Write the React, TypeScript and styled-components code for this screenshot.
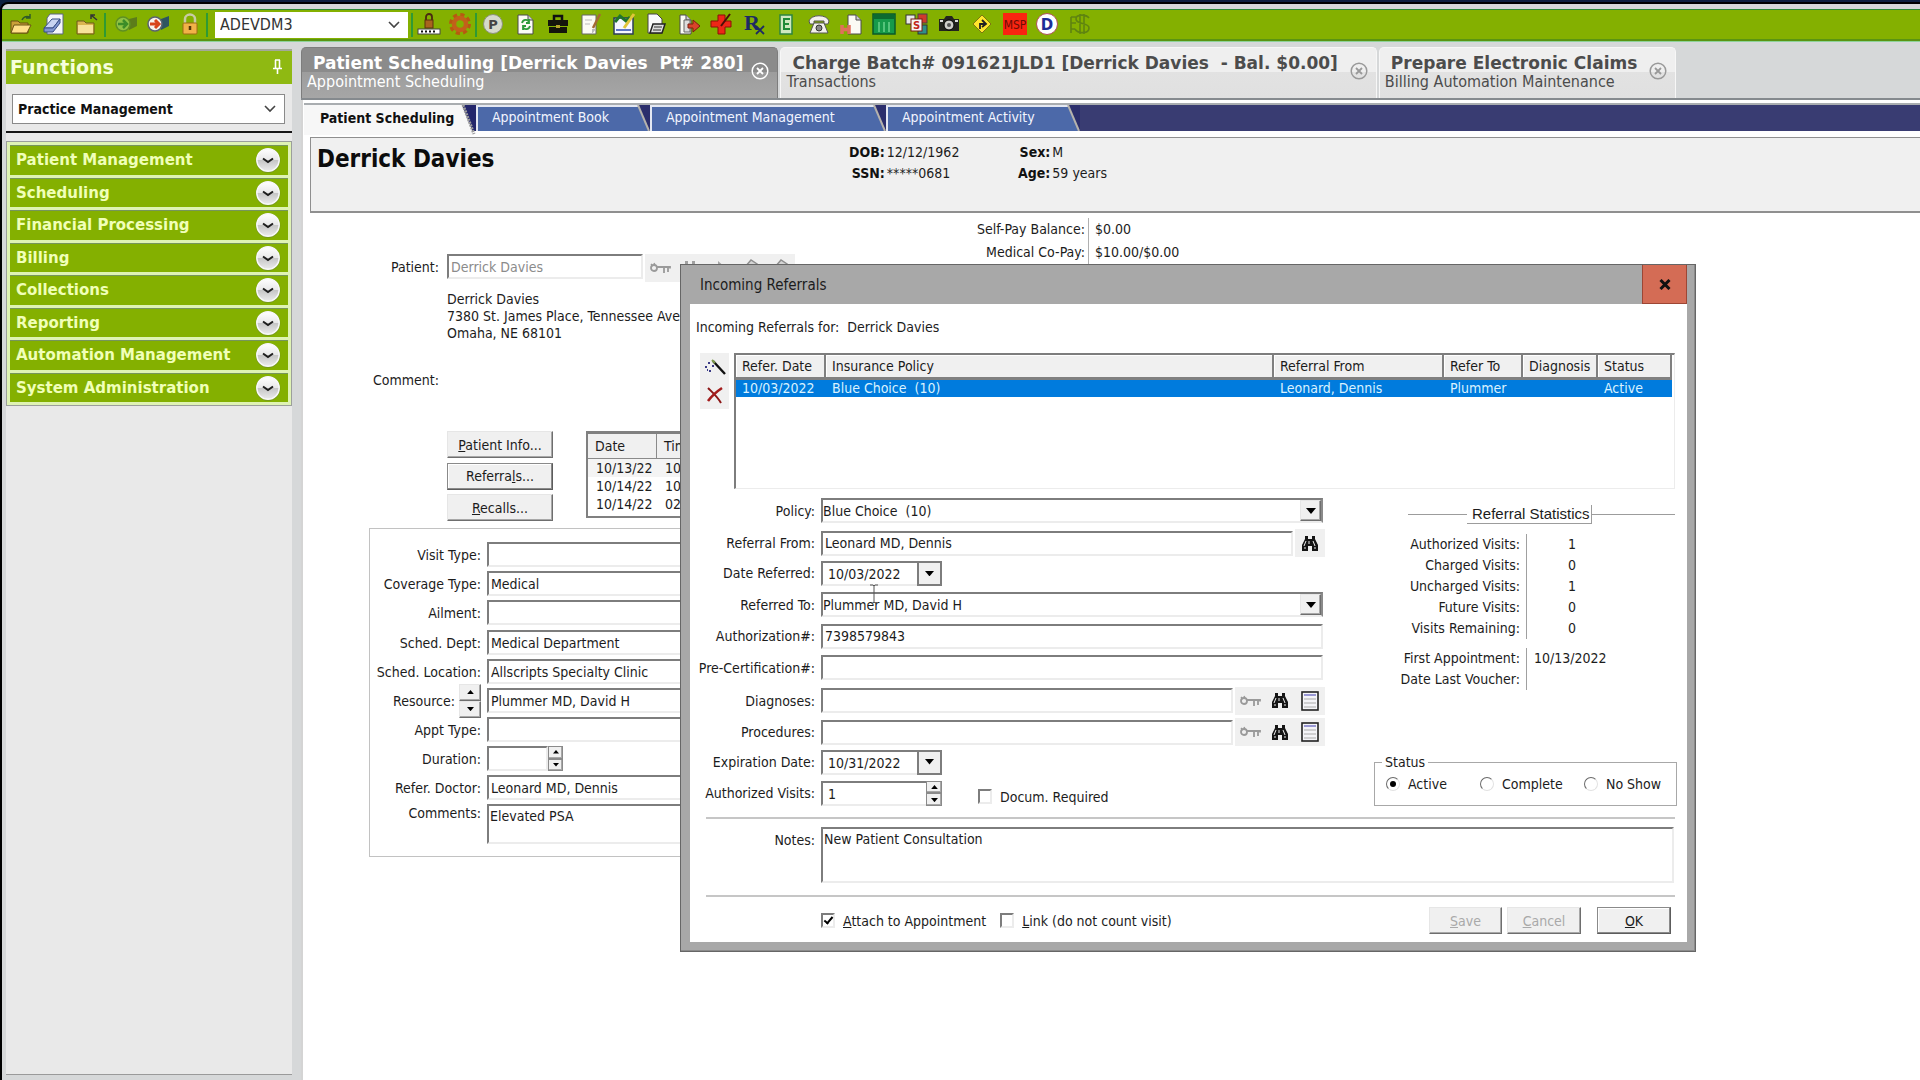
import React from "react";
import styled, { createGlobalStyle, css } from "styled-components";

const FONT = `"DejaVu Sans Condensed", "DejaVu Sans", sans-serif`;
const WIDE = `"DejaVu Sans", sans-serif`;

const Global = createGlobalStyle`
  *, *::before, *::after { box-sizing: border-box; }
  html, body { margin: 0; padding: 0; background: #0d2040; }
  body { font: 14px/18px ${FONT}; color: #1c1c1c; overflow: hidden; }
  button, input, select, textarea { font: inherit; color: inherit; margin: 0; border-radius: 0; }
  button { padding: 0; border: 0; background: none; }
  dl, dd, dt, p, h1, h2, fieldset { margin: 0; padding: 0; }
`;

const sunken = css`
  border: 2px solid;
  border-color: #7d7d7d #ececec #ececec #7d7d7d;
  background: #fff;
`;
const raised = css`
  border: 1px solid;
  border-color: #e6e6e6 #6e6e6e #6e6e6e #e6e6e6;
  box-shadow: inset -1px -1px 0 #a8a8a8;
  background: #f0f0f0;
`;

/* ---------- shell ---------- */
const Shell = styled.div`
  position: relative;
  min-height: 100vh;
  display: flex;
  flex-direction: column;
  padding-top: 2px;
`;
const Frame = styled.div`
  flex: 1;
  display: flex;
  flex-direction: column;
  background: #d6d8d9;
  border: solid #000;
  border-width: 2px 0 0 2px;
  border-top-left-radius: 8px;
  overflow: hidden;
`;
const Toolbar = styled.header`
  margin-top: 5px;
  height: 32px;
  display: flex;
  align-items: center;
  background: #84b000;
  border-top: 1px solid #2c8a38;
  border-bottom: 2px solid #5a9412;
  box-shadow: 0 1px 0 #8fd39a;
`;
const IconRun = styled.div<{ $width: number; $count: number; $start?: number }>`
  display: grid;
  grid-template-columns: repeat(${(p) => p.$count}, 1fr);
  width: ${(p) => p.$width}px;
  margin-left: ${(p) => p.$start ?? 0}px;
`;
const ToolButton = styled.button`
  display: grid;
  place-items: start center;
  height: 26px;
`;
const Divider = styled.span`
  width: 2px;
  height: 24px;
  background: #2f9a34;
`;
const SelectBox = styled.div<{ $kind: "toolbar" | "panel" }>`
  display: grid;
  grid-template-columns: 1fr 28px;
  align-items: center;
  background: #fff;
  > select {
    grid-area: 1 / 1 / 2 / 3;
    appearance: none;
    border: 0;
    background: none;
    padding: 0 5px;
    height: 100%;
    outline: 0;
  }
  > svg { grid-area: 1 / 2; justify-self: center; pointer-events: none; }
  ${(p) =>
    p.$kind === "toolbar"
      ? css`width: 193px; height: 26px; margin: 0 3px 0 7px; font-size: 16px; color: #333;`
      : css`height: 30px; margin: 10px 7px 7px 6px; border: 1px solid #8a8a8a; font-weight: 700; color: #111;`}
`;

const Workspace = styled.div`
  flex: 1;
  display: grid;
  grid-template-columns: 290px 1fr;
`;

/* ---------- functions panel ---------- */
const Panel = styled.aside`
  margin: 8px 0 5px 4px;
  background: #e9e9e9;
  border-bottom: 1px solid #9a9a9a;
`;
const PanelTitle = styled.h2`
  height: 35px;
  display: flex;
  align-items: center;
  justify-content: space-between;
  padding: 0 9px 2px 4px;
  background: #8fb912;
  border-top: 2px solid #a3a89a;
  font: 700 19px/24px ${WIDE};
  color: #f6ffdc;
`;
const Rule = styled.div`
  height: 2px;
  background: #161616;
`;
const Menu = styled.nav`
  margin-top: 8px;
  height: 265px;
  display: grid;
  grid-auto-rows: 1fr;
  gap: 3px;
  padding: 3px;
  border: 1px solid #9b9f9b;
  background: #dff3b4;
`;
const MenuItem = styled.button`
  display: flex;
  align-items: center;
  justify-content: space-between;
  padding: 0 7px 0 6px;
  background: #84b000;
  border-top: 1px solid #76955c;
  font: 700 15px/20px ${WIDE};
  color: #f0ffb8;
`;

/* ---------- document tabs ---------- */
const Content = styled.main`
  margin-left: 9px;
  padding-top: 6px;
  display: flex;
  flex-direction: column;
  min-width: 0;
`;
const DocTabs = styled.div`
  display: flex;
  gap: 2px;
  height: 51px;
`;
const DocTab = styled.div<{ $active?: boolean }>`
  display: flex;
  align-items: center;
  gap: ${(p) => (p.$active ? 8 : 12)}px;
  padding: 0 8px 0 5px;
  border: solid ${(p) => (p.$active ? "#7d7d7d" : "#f7f7f7")};
  border-width: 1px 1px 0;
  border-radius: 5px 5px 0 0;
  background: ${(p) =>
    p.$active
      ? "linear-gradient(#8b8b8b 48%, #9d9d9d 48%, #a6a6a6)"
      : "linear-gradient(#efefef 48%, #e2e2e2 48%, #e0e0e0)"};
  color: ${(p) => (p.$active ? "#fff" : "#4c4c4c")};
`;
const DocText = styled.div`
  display: flex;
  flex-direction: column;
  padding-bottom: 3px;
  white-space: pre;
  font-size: 16px;
  line-height: 18px;
  > strong { padding-left: 6px; font: 700 17px/20px ${WIDE}; }
`;
const PageFrame = styled.div`
  flex: 1;
  display: flex;
  flex-direction: column;
  border-top: 2px solid #858a8e;
  background: #fff;
  padding-left: 3px;
  box-shadow: inset 2px 0 0 #d4d4d4;
`;
const SubTabs = styled.div`
  display: grid;
  grid-template-columns: 172px 174px 236px 194px 1fr;
  height: 26px;
  margin-top: 5px;
  background: #393c72;
  box-shadow: 0 -2px 0 #a9adb0;
`;
const SubTab = styled.button<{ $active?: boolean }>`
  display: flex;
  min-width: 0;
  height: ${(p) => (p.$active ? 30 : 26)}px;
  font-weight: ${(p) => (p.$active ? 700 : 400)};
  color: ${(p) => (p.$active ? "#111" : "#f2f5ff")};
  > span {
    flex: 1;
    align-self: stretch;
    display: flex;
    align-items: center;
    padding-left: 14px;
    padding-bottom: ${(p) => (p.$active ? 6 : 4)}px;
    background: ${(p) => (p.$active ? "#f7f7f7" : "#4c69a9")};
    border: solid ${(p) => (p.$active ? "#f7f7f7" : "#e4e8f2")};
    border-width: 2px 0 0 2px;
    white-space: nowrap;
  }
`;
const PatientHeader = styled.section`
  margin: 6px 0 0 6px;
  height: 76px;
  padding: 4px 0 0 6px;
  display: grid;
  grid-template-columns: 532px 169px 1fr;
  align-items: start;
  border: 1px solid #8f8f8f;
  border-bottom-width: 2px;
  border-right: 0;
  background: #f0f0f0;
  > h1 { padding-top: 1px; font: 700 24px/32px ${FONT}; color: #0c0c0c; }
`;
const Facts = styled.dl`
  display: grid;
  grid-template-columns: max-content max-content;
  column-gap: 2px;
  line-height: 21px;
  > dt { font-weight: 700; text-align: right; color: #111; }
`;

/* ---------- page body ---------- */
const Body = styled.div`
  display: grid;
  grid-template-columns: 606px 1fr;
  padding-left: 65px;
`;
const PatientColumn = styled.div`
  display: flex;
  flex-direction: column;
  padding-top: 41px;
`;
const PatientGrid = styled.div`
  display: grid;
  grid-template-columns: 70px 1fr;
  column-gap: 8px;
`;
const RightLabel = styled.label`
  text-align: right;
  white-space: nowrap;
  align-self: center;
`;
const PatientField = styled.div`
  display: flex;
  gap: 2px;
  height: 26px;
`;
const Field = styled.input<{ $w?: string; $muted?: boolean }>`
  ${sunken}
  width: ${(p) => p.$w ?? "100%"};
  min-width: 0;
  height: 25px;
  padding: 0 2px;
  outline: 0;
  ${(p) => p.$muted && "color: #8b8b8b;"}
`;
const Strip = styled.div<{ $vertical?: boolean }>`
  display: grid;
  grid-auto-flow: ${(p) => (p.$vertical ? "row" : "column")};
  ${(p) => (p.$vertical ? "grid-auto-rows: 28px; width: 29px;" : "grid-auto-columns: 30px; height: 28px;")}
  background: #f0f0f0;
  color: #9a9a9a;
  > button { display: grid; place-items: center; }
`;
const Address = styled.address`
  grid-column: 2;
  margin-top: 11px;
  font-style: normal;
  line-height: 17px;
`;
const CommentRow = styled.div`
  grid-column: 1 / 3;
  display: grid;
  grid-template-columns: 70px 1fr;
  margin-top: 29px;
  text-align: right;
`;
const Actions = styled.div`
  grid-column: 2;
  margin-top: 42px;
  height: 90px;
  display: flex;
  align-items: flex-start;
  gap: 33px;
`;
const ActionStack = styled.div`
  width: 106px;
  height: 90px;
  display: flex;
  flex-direction: column;
  justify-content: space-between;
`;
const Push = styled.button<{ $default?: boolean }>`
  ${raised}
  height: 27px;
  white-space: nowrap;
  ${(p) => p.$default && "border-color: #8a8a8a #5c5c5c #5c5c5c #8a8a8a; box-shadow: inset -1px -1px 0 #8a8a8a, inset 1px 1px 0 #fff;"}
  &:disabled { color: #a9a9a9; }
`;
const VisitTable = styled.table`
  width: 220px;
  border: 2px solid #808080;
  border-top-width: 3px;
  border-spacing: 0;
  table-layout: fixed;
  background: #fff;
  th, td { padding: 0 8px; text-align: left; font-weight: 400; white-space: nowrap; }
  th { height: 25px; background: #f0f0f0; border: solid #8a8a8a; border-width: 0 1px 1px 0; padding-left: 7px; }
  td { height: 18px; }
  tbody tr:first-child td { background: #f4f4f4; }
  tbody tr:last-child td { padding-bottom: 3px; }
  col:first-child { width: 69px; }
`;
const Booking = styled.section`
  margin-top: 7px;
  width: 560px;
  padding: 13px 0 12px;
  border: 1px solid #c2c2c2;
  display: flex;
  flex-direction: column;
  gap: 5px;
`;
const BookingGroup = styled.div`
  display: grid;
  grid-template-columns: 111px 1fr;
  gap: 4px 6px;
`;
const ResourceLabel = styled.div`
  display: flex;
  justify-content: flex-end;
  align-items: center;
  gap: 4px;
  height: 25px;
`;
const Spin = styled.div<{ $w: number; $h: number }>`
  display: grid;
  grid-template-rows: 1fr 1fr;
  flex: none;
  width: ${(p) => p.$w}px;
  height: ${(p) => p.$h}px;
  > button { ${raised} display: grid; place-items: center; min-height: 0; }
`;
const InlineSpin = styled.div<{ $w: number }>`
  display: flex;
  width: ${(p) => p.$w}px;
  height: 25px;
  > input { flex: 1; }
  > div > button { border-color: #8a8a8a; }
`;
const Area = styled.textarea<{ $h: number }>`
  ${sunken}
  display: block;
  width: 100%;
  height: ${(p) => p.$h}px;
  padding: 2px 1px 0;
  line-height: 17px;
  resize: none;
  outline: 0;
`;
const TopLabel = styled.label`
  text-align: right;
`;
const Balances = styled.dl`
  display: grid;
  grid-template-columns: 114px 1fr;
  align-content: start;
  line-height: 23px;
  margin-top: 5px;
  > dt { text-align: right; padding-right: 3px; border-right: 1px solid #b0b0b0; white-space: nowrap; }
  > dd { padding-left: 6px; }
`;

/* ---------- dialog ---------- */
const Dialog = styled.section`
  position: absolute;
  left: 680px;
  top: 264px;
  width: 1016px;
  border: 1px solid #666;
  background: #a8a8a8;
  padding: 0 8px 9px 9px;
  box-shadow: inset -1px -1px 0 #8b8b8b;
`;
const DialogBar = styled.header`
  height: 39px;
  display: flex;
  align-items: center;
  justify-content: space-between;
  padding-left: 10px;
  font-size: 15px;
`;
const Close = styled.button`
  width: 45px;
  height: 39px;
  display: grid;
  place-items: center;
  background: #d46c55;
  border: solid #9d4634;
  border-width: 0 1px 1px;
`;
const DialogBody = styled.form`
  display: flex;
  flex-direction: column;
  background: #fff;
  padding: 14px 10px 8px 0;
`;
const Caption = styled.p`
  display: flex;
  gap: 8px;
  padding-left: 6px;
`;
const ListRow = styled.div`
  margin-top: 17px;
  padding: 0 2px 0 10px;
  display: flex;
  align-items: flex-start;
  gap: 5px;
`;
const ListBox = styled.div`
  flex: 1;
  height: 136px;
  border: solid;
  border-color: #7d7d7d #ececec #ececec #7d7d7d;
  border-width: 2px 1px 1px 2px;
  padding-right: 2px;
`;
const ReferralTable = styled.table`
  width: 100%;
  border-spacing: 0;
  table-layout: fixed;
  th, td { padding: 0 0 0 6px; text-align: left; font-weight: 400; white-space: nowrap; overflow: hidden; }
  th {
    height: 25px;
    background: #f0f0f0;
    border: solid #808080;
    border-width: 0 2px 3px 0;
    box-shadow: inset 1px 1px 0 #fff;
  }
  td { height: 17px; line-height: 17px; background: #007bdd; color: #d9f2ff; }
`;
const FormRow = styled.div`
  margin-top: 9px;
  display: grid;
  grid-template-columns: 635px 1fr;
  column-gap: 49px;
`;
const Fields = styled.div`
  height: 308px;
  display: flex;
  flex-direction: column;
  justify-content: space-between;
`;
const FieldRow = styled.div`
  display: grid;
  grid-template-columns: 125px 1fr;
  column-gap: 6px;
  align-items: center;
  height: 25px;
`;
const FieldLine = styled.div`
  display: flex;
  align-items: center;
  gap: 2px;
  > input { flex: 1; }
`;
const Drop = styled.div`
  ${sunken}
  border-right-color: #8a8a8a;
  margin-right: 2px;
  height: 25px;
  display: grid;
  grid-template-columns: 1fr 21px;
  > select {
    grid-area: 1 / 1 / 2 / 3;
    appearance: none;
    border: 0;
    background: none;
    padding: 0;
    outline: 0;
    white-space: pre;
  }
  > span { grid-area: 1 / 2; ${raised} display: grid; place-items: center; pointer-events: none; }
`;
const DateBox = styled.div`
  display: flex;
  width: 121px;
  height: 25px;
  > input { flex: 1; border-right: 0; padding: 2px 0 0 5px; }
  > button { width: 25px; border: 2px solid #7d7d7d; background: #f0f0f0; display: grid; place-items: center; }
  > div > button { border-color: #8a8a8a; }
`;
const VisitsLine = styled.div`
  display: flex;
  align-items: flex-end;
  gap: 36px;
`;
const Check = styled.label`
  display: flex;
  align-items: center;
  gap: 8px;
  white-space: nowrap;
  > input {
    appearance: none;
    ${sunken}
    width: 14px;
    height: 15px;
    display: grid;
    place-items: center;
    &:checked::after {
      content: "";
      width: 5px;
      height: 9px;
      margin-top: -3px;
      border: solid #000;
      border-width: 0 2px 2px 0;
      transform: rotate(40deg);
    }
  }
`;
const Side = styled.div`
  display: flex;
  flex-direction: column;
  padding-top: 7px;
`;
const StatHeading = styled.div`
  display: grid;
  grid-template-columns: 59px max-content 1fr;
  align-items: center;
  margin: 0 2px 0 34px;
  font: 15px/18px "Liberation Sans", Arial, sans-serif;
  &::before, &::after { content: ""; height: 1px; background: #9c9c9c; }
  > span { padding: 0 1px 0 5px; border: solid #9c9c9c; border-width: 0 1px 1px 0; }
`;
const Stats = styled.dl<{ $gap: number; $numeric?: boolean }>`
  margin-top: ${(p) => p.$gap}px;
  display: grid;
  grid-template-columns: 153px 49px 1fr;
  line-height: 21px;
  > dt { text-align: right; padding-right: 6px; border-right: 1px solid #a0a0a0; white-space: nowrap; }
  > dd { ${(p) => (p.$numeric ? "text-align: right;" : "padding-left: 7px; grid-column: 2 / 4;")} }
  > dt { grid-column: 1; }
`;
const StatusBox = styled.fieldset`
  margin-top: auto;
  height: 53px;
  min-width: 0;
  border: 1px solid #a8a8a8;
  padding: 4px 0 0 11px;
  > legend { margin-left: -4px; padding: 0 3px; }
`;
const StatusRow = styled.div`
  display: grid;
  grid-template-columns: 94px 104px 1fr;
`;
const Radio = styled.label`
  display: flex;
  align-items: center;
  gap: 8px;
  white-space: nowrap;
  > input {
    appearance: none;
    width: 14px;
    height: 14px;
    border: 1px solid;
    border-color: #6a6a6a #e2e2e2 #e2e2e2 #6a6a6a;
    border-radius: 50%;
    display: grid;
    place-items: center;
    &:checked::after { content: ""; width: 6px; height: 6px; border-radius: 50%; background: #000; }
  }
`;
const Separator = styled.hr<{ $top: number }>`
  width: calc(100% - 18px);
  margin: ${(p) => p.$top}px 0 0 16px;
  height: 2px;
  border: 0;
  background: #c6c6c6;
`;
const NotesRow = styled.div`
  display: grid;
  grid-template-columns: 125px 1fr;
  column-gap: 6px;
  margin: 8px 3px 0 0;
  > label { padding-top: 4px; }
`;
const Footer = styled.footer`
  margin: 10px 6px 0 131px;
  display: flex;
  align-items: center;
`;
const FooterChecks = styled.div`
  flex: 1;
  display: flex;
  gap: 14px;
`;
const FooterButtons = styled.div`
  display: grid;
  grid-template-columns: 73px 74px 74px;
  column-gap: 5px;
  > :last-child { margin-left: 11px; margin-right: -11px; }
  padding-right: 11px;
`;
const Pointer = styled.svg`
  position: absolute;
  left: 869px;
  top: 584px;
`;

/* ---------- drawings ---------- */
const Chevron = () => (
  <svg width="12" height="8" viewBox="0 0 12 8"><path d="M1 1l5 5 5-5" fill="none" stroke="#444" strokeWidth="1.6" /></svg>
);
const Tri = ({ up, s = 8 }: { up?: boolean; s?: number }) => (
  <svg width={s} height={s * 0.6} viewBox="0 0 10 6"><path d={up ? "M0 6L5 0l5 6z" : "M0 0h10L5 6z"} fill="#000" /></svg>
);
const Pin = () => (
  <svg width="11" height="16" viewBox="0 0 11 16"><path d="M3 1h5M3.500 1v8M7.500 1v8M1 9.500h9M5.500 9v6" fill="none" stroke="#fff" strokeWidth="1.600" /></svg>
);
const RoundChevron = () => (
  <svg width="26" height="26" viewBox="0 0 26 26">
    <defs>
      <linearGradient id="knob" x1="0" y1="0" x2="0" y2="1">
        <stop offset="0" stopColor="#fff" /><stop offset=".5" stopColor="#e8e8e8" /><stop offset=".52" stopColor="#c6c6c6" /><stop offset="1" stopColor="#ececec" />
      </linearGradient>
    </defs>
    <circle cx="13" cy="13.500" r="12.300" fill="#6d8a2c" opacity=".7" />
    <circle cx="13" cy="13" r="11.200" fill="url(#knob)" stroke="#f8f8f8" strokeWidth="1.500" />
    <path d="M8 11.500l5 3.500 5-3.500" fill="none" stroke="#1e1e1e" strokeWidth="2" />
  </svg>
);
const TabClose = ({ light }: { light?: boolean }) => (
  <svg width="18" height="18" viewBox="0 0 18 18">
    <circle cx="9" cy="9" r="7.800" fill="none" stroke={light ? "#fff" : "#999"} strokeWidth="1.500" />
    <path d="M6 6l6 6M12 6l-6 6" stroke={light ? "#fff" : "#999"} strokeWidth="1.800" />
  </svg>
);
const Slant = ({ active }: { active?: boolean }) => (
  <svg width="16" height={active ? 30 : 26} viewBox={active ? "0 0 16 30" : "0 0 16 26"}>
    {active ? (
      <><path d="M4 0h12v26H13z" fill="#23266b" /><path d="M0 0h2l12 30H0z" fill="#f7f7f7" /><path d="M3 0l11 29" stroke="#9c9c9c" strokeWidth="3" strokeDasharray="2 1" /></>
    ) : (
      <><path d="M4 0h12v26z" fill="#2b2e6c" /><path d="M0 0h4l11 26H0z" fill="#4c69a9" /><path d="M0 1h4" stroke="#e4e8f2" strokeWidth="2" /><path d="M4 0l11 26" stroke="#b5b2ac" strokeWidth="2" /></>
    )}
  </svg>
);
const Key = () => (
  <svg width="22" height="12" viewBox="0 0 22 12">
    <path d="M2 2l2 2M5 1l1 2" stroke="#9a9a9a" strokeWidth="1.500" />
    <circle cx="5" cy="6" r="3" fill="none" stroke="#9a9a9a" strokeWidth="1.800" />
    <path d="M8 5h13v1.500M15 5v6M19 5v5" fill="none" stroke="#9a9a9a" strokeWidth="1.800" />
  </svg>
);
const Binoculars = ({ gray }: { gray?: boolean }) => (
  <svg width="18" height="17" viewBox="0 0 18 17" fill={gray ? "#a0a0a0" : "#151515"}>
    <path d="M4 1h3v3h4V1h3v3l3 6v6h-6v-5H7v5H1v-6l3-6z" />
    <path d="M5 6l-2 5M8 6v3M12 6l2 5M3 13h2M13 13h2" stroke="#eee" strokeWidth="1" />
  </svg>
);
const Arrow = () => (
  <svg width="16" height="17" viewBox="0 0 16 17"><path d="M6 1l8 7-8 7v-4H1V5h5z" fill="#a6a6a6" /></svg>
);
const Stamp = () => (
  <svg width="18" height="19" viewBox="0 0 18 19"><path d="M4 8l6-7 6 4-3 5v7H3v-8z" fill="#d4d4d4" stroke="#8f8f8f" strokeWidth="1.500" /><path d="M6 8l5 3M6 13h5" stroke="#8f8f8f" /></svg>
);
const Sheet = () => (
  <svg width="18" height="20" viewBox="0 0 18 20">
    <rect x="1" y="1" width="16" height="18" fill="#f4f4f8" stroke="#222" strokeWidth="1.600" />
    <path d="M3 4h12" stroke="#7a78c8" strokeWidth="1.500" /><path d="M3 8h12M3 12h12M3 16h12" stroke="#aaa" />
  </svg>
);
const Wand = () => (
  <svg width="22" height="18" viewBox="0 0 22 18">
    <path d="M9 3l12 13" stroke="#111" strokeWidth="2.400" /><path d="M8 2l3 3" stroke="#7e9a4a" strokeWidth="2" />
    <path d="M4 5h2M8 8h2M1 9h2M5 13h2M3 12h1" stroke="#3a3a86" strokeWidth="2" />
  </svg>
);
const RedX = () => (
  <svg width="18" height="18" viewBox="0 0 18 18"><path d="M2 2c4 4 9 8 13 15" fill="none" stroke="#8c1616" strokeWidth="2" /><path d="M16 2C10 6 5 11 2 15" fill="none" stroke="#a41c1c" strokeWidth="2.600" /></svg>
);
const G = ({ children }: { children: React.ReactNode }) => (
  <svg width="24" height="24" viewBox="0 0 24 24">{children}</svg>
);
const Page = ({ x = 4, w = 15 }: { x?: number; w?: number }) => (
  <><path d={`M${x} 3h${w - 5}l5 5v14h-${w}z`} fill="#fbfbf4" stroke="#4a4a4a" /><path d={`M${x + w - 5} 3v5h5`} fill="#cfcfcf" stroke="#4a4a4a" /></>
);

const fileIcons: [string, React.ReactNode][] = [
  ["Open", <G><path d="M2 9h7l2 2h8v10H2z" fill="#caa03a" stroke="#6a5312" /><path d="M5 13h17l-4 8H2z" fill="#ffe08a" stroke="#6a5312" /><path d="M13 8c2-4 5-4 8-3M21 2v4h-4" fill="none" stroke="#2f5a2a" strokeWidth="1.500" /></G>],
  ["Erase", <G><path d="M8 2h13v20H5V6z" fill="#f3f4fa" stroke="#5b6680" /><path d="M2 16l8-9h8l-7 9z" fill="#c9d4f2" stroke="#374d86" /><path d="M2 16v4h9l7-9V7l-7 9z" fill="#8095cf" stroke="#374d86" /></G>],
  ["Close", <G><path d="M2 9h7l2 2h8v11H2z" fill="#d9b550" stroke="#6f5a1c" /><path d="M3 13h15v8H3z" fill="#f7e29a" /><path d="M22 8l-6-5m0 4V3h4" fill="none" stroke="#333" strokeWidth="1.500" /></G>],
];
const navIcons: [string, React.ReactNode][] = [
  ["Forward", <G><path d="M15 7l8-2v9l-8 4z" fill="#5c7d1a" /><circle cx="9" cy="12" r="7" fill="#8fc244" stroke="#5f8f22" strokeWidth="1.500" /><path d="M4 12h8M9 8l4 4-4 4" fill="none" stroke="#3c8c28" strokeWidth="2.500" /></G>],
  ["Record", <G><path d="M15 7l8-3v10l-8 4z" fill="#2d5560" /><circle cx="9" cy="12" r="7" fill="#f6f3ee" stroke="#5b6370" strokeWidth="1.500" /><path d="M4 12h8M9 8l4 4-4 4" fill="none" stroke="#d8431a" strokeWidth="3" /></G>],
  ["Lock", <G><path d="M7 12V7a5 4.500 0 0 1 10 0v5" fill="none" stroke="#c8cba4" strokeWidth="2.500" /><rect x="5" y="11" width="14" height="11" rx="1" fill="#f1b248" stroke="#9b6b13" /><path d="M12 14v4" stroke="#553808" strokeWidth="2.500" /></G>],
];
const adminIcons: [string, React.ReactNode][] = [
  ["Password", <G><path d="M9 13V5a3 3 0 0 1 6 0v8" fill="none" stroke="#4a2a10" strokeWidth="1.800" /><rect x="8" y="8" width="8" height="8" fill="#a8641e" stroke="#5a310c" /><rect x="1" y="17" width="22" height="5" fill="#fff" stroke="#444" /><path d="M4 19.500h16" stroke="#111" strokeWidth="2" strokeDasharray="2 2" /></G>],
  ["Settings", <G><circle cx="12" cy="12" r="9" fill="none" stroke="#b65a10" strokeWidth="4" strokeDasharray="4 3.070" /><circle cx="12" cy="12" r="6" fill="none" stroke="#c2601a" strokeWidth="4.500" /></G>],
];
const moduleIcons: [string, React.ReactNode][] = [
  ["Patient", <G><circle cx="12" cy="12" r="9.500" fill="#d6d9cb" stroke="#8b907c" /><text x="12" y="17" textAnchor="middle" fontFamily="DejaVu Sans" fontWeight="700" fontSize="13" fill="#444">P</text></G>],
  ["Refresh", <G><Page /><path d="M8 11c1-4 6-4 7-1M16 14c-1 4-6 4-7 1M15 7v4h-3M9 18v-4h3" fill="none" stroke="#2c9a3a" strokeWidth="1.800" /></G>],
  ["Case", <G><path d="M8 8V4h8v4" fill="none" stroke="#111" strokeWidth="2.500" /><path d="M2 8h20v6H2zM3 15h18v6H3z" fill="#14140c" /><path d="M10 13h4v3h-4z" fill="#b5a22c" /></G>],
  ["Note", <G><path d="M3 3h14v19H3z" fill="#fbfbf4" stroke="#666" /><path d="M17 17h-4v5z" fill="#bbb" /><path d="M21 2l-7 14" stroke="#a56b34" strokeWidth="2.500" /><path d="M6 8h7M6 12h5" stroke="#bbb" /></G>],
  ["Chart", <G><rect x="2" y="6" width="19" height="16" fill="#f6f7ff" stroke="#2b3c58" strokeWidth="1.500" /><path d="M3 10l5-6 6 5 4-4" fill="none" stroke="#20752c" strokeWidth="3" /><path d="M22 2L12 16" stroke="#e1c53a" strokeWidth="3" /><path d="M4 18h15" stroke="#5e74c4" strokeWidth="2" /></G>],
  ["Fax", <G><path d="M4 2h9l5 5v14H4z" fill="#fafafa" stroke="#444" /><path d="M9 12h12l-3 9H6z" fill="#ddd" stroke="#222" strokeWidth="1.500" /><path d="M10 15h8M9 18h8" stroke="#333" /></G>],
  ["Export", <G><Page x={3} w={11} /><path d="M7 8h6v12H7z" fill="#ddd" stroke="#666" /><path d="M11 12h5V8l7 6-7 6v-4h-5z" fill="#d8442a" stroke="#7c1d10" /></G>],
  ["Medical", <G><path d="M9 3h7v6h6v6h-6v7H9v-7H2V9h7z" fill="#ee2617" stroke="#8b1008" /><path d="M21 2l-9 12" stroke="#4a1008" strokeWidth="2" /></G>],
  ["Prescriptions", <G><text x="10" y="18" textAnchor="middle" fontFamily="Liberation Serif" fontWeight="700" fontSize="22" fill="#1d2a63">R</text><path d="M14 14l8 8M22 14l-8 8" stroke="#1d2a63" strokeWidth="1.800" /></G>],
  ["Encounter", <G><rect x="6" y="3" width="12" height="19" fill="#cfe8c0" stroke="#2c8440" strokeWidth="1.500" /><path d="M9 7h7M9 12h6M9 17h7M10 7v10" stroke="#1f8a38" strokeWidth="2" /></G>],
  ["Phone", <G><path d="M2 9c2-7 18-7 20 0l-1 3h-4V9H7v3H3z" fill="#f3f1ec" stroke="#555" /><path d="M7 11h10l4 10H3z" fill="#f3f1ec" stroke="#555" /><circle cx="12" cy="16" r="3" fill="#888" stroke="#333" /></G>],
  ["Records", <G><Page x={8} w={13} /><path d="M2 13v9M9 13v9M2 17.500h7" stroke="#e0705c" strokeWidth="3.500" /></G>],
  ["Table", <G><rect x="1" y="2" width="22" height="20" fill="#179a4a" stroke="#0b5a28" strokeWidth="1.500" /><path d="M2 5h20" stroke="#0c6b30" strokeWidth="4" /><path d="M7 10v10M12 10v10M17 10v10" stroke="#7fdf9c" strokeWidth="1.200" /></G>],
  ["Statements", <G><rect x="1" y="3" width="9" height="9" fill="#e9e9e9" stroke="#333" /><rect x="13" y="2" width="9" height="9" fill="#cf3a2c" stroke="#444" /><rect x="13" y="13" width="9" height="9" fill="#2f8f8a" stroke="#333" /><rect x="6" y="7" width="11" height="12" fill="#f5f5f5" stroke="#7a1a14" /><text x="11.500" y="17" textAnchor="middle" fontFamily="DejaVu Sans" fontWeight="700" fontSize="10" fill="#c2261b">S</text></G>],
  ["Camera", <G><path d="M2 7h5l2-3h6l2 3h5v12H2z" fill="#23241f" /><circle cx="12" cy="13" r="5" fill="#cfcfca" stroke="#000" /><circle cx="12" cy="13" r="2" fill="#555" /><path d="M3 9h3M18 9h3" stroke="#ddd" strokeWidth="2" /></G>],
  ["Directions", <G><path d="M12 3l9 9-9 9-9-9z" fill="#ffe62c" stroke="#7e7612" /><path d="M10 17v-5h5M12 8l4 4-4 3" fill="none" stroke="#222" strokeWidth="1.800" /></G>],
  ["MSP", <G><rect x="0" y="1" width="24" height="22" fill="#fa2410" /><text x="12" y="17" textAnchor="middle" fontFamily="DejaVu Sans Condensed" fontSize="12" fill="#6b0d05">MSP</text></G>],
  ["Documents", <G><circle cx="12" cy="12" r="10.500" fill="#fff" stroke="#b0505a" /><text x="12" y="17.500" textAnchor="middle" fontFamily="DejaVu Sans" fontWeight="700" fontSize="15" fill="#1c2d96">D</text></G>],
  ["Payments", <G><path d="M21 6c-3-4-13-4-13 1 0 6 13 3 13 9 0 6-11 6-14 1M12 2v20M16 2v20M3 5h6M3 11h5M3 17h4M3 5v16" fill="none" stroke="#5f8410" strokeWidth="1.600" /></G>],
];

const menu = ["Patient Management", "Scheduling", "Financial Processing", "Billing", "Collections", "Reporting", "Automation Management", "System Administration"];
const docs = [
  { title: "Patient Scheduling [Derrick Davies  Pt# 280]", sub: "Appointment Scheduling", active: true },
  { title: "Charge Batch# 091621JLD1 [Derrick Davies  - Bal. $0.00]", sub: "Transactions" },
  { title: "Prepare Electronic Claims", sub: "Billing Automation Maintenance" },
];
const subTabs = ["Patient Scheduling", "Appointment Book", "Appointment Management", "Appointment Activity"];

const Tools = ({ items }: { items: [string, React.ReactNode][] }) => (
  <>{items.map(([name, icon]) => <ToolButton key={name} aria-label={name}>{icon}</ToolButton>)}</>
);
const SpinButtons = ({ w, h, s }: { w: number; h: number; s: number }) => (
  <Spin $w={w} $h={h}>
    <button type="button" aria-label="Up"><Tri up s={s} /></button>
    <button type="button" aria-label="Down"><Tri s={s} /></button>
  </Spin>
);
const Labeled = ({ id, label, value = "" }: { id: string; label: string; value?: string }) => (
  <><RightLabel htmlFor={id}>{label}</RightLabel><Field id={id} defaultValue={value} /></>
);
const DropField = ({ id, label, value }: { id: string; label: string; value: string }) => (
  <FieldRow>
    <RightLabel htmlFor={id}>{label}</RightLabel>
    <Drop><select id={id}><option>{value}</option></select><span><Tri s={10} /></span></Drop>
  </FieldRow>
);
const DateField = ({ id, label, value }: { id: string; label: string; value: string }) => (
  <FieldRow>
    <RightLabel htmlFor={id}>{label}</RightLabel>
    <DateBox><Field id={id} defaultValue={value} /><button type="button" aria-label="Choose date"><Tri s={9} /></button></DateBox>
  </FieldRow>
);
const CodeField = ({ id, label }: { id: string; label: string }) => (
  <FieldRow>
    <RightLabel htmlFor={id}>{label}</RightLabel>
    <FieldLine>
      <Field id={id} />
      <Strip>
        <button type="button" aria-label="Key"><Key /></button>
        <button type="button" aria-label="Find"><Binoculars /></button>
        <button type="button" aria-label="List"><Sheet /></button>
      </Strip>
    </FieldLine>
  </FieldRow>
);

const ReferralsDialog = () => (
  <Dialog role="dialog" aria-label="Incoming Referrals">
    <DialogBar>
      <span>Incoming Referrals</span>
      <Close aria-label="Close"><svg width="12" height="11" viewBox="0 0 12 11"><path d="M1.500 1l9 9M10.500 1l-9 9" stroke="#111" strokeWidth="3" /></svg></Close>
    </DialogBar>
    <DialogBody onSubmit={(e) => e.preventDefault()}>
      <Caption><span>Incoming Referrals for:</span><span>Derrick Davies</span></Caption>
      <ListRow>
        <Strip $vertical>
          <button type="button" aria-label="New"><Wand /></button>
          <button type="button" aria-label="Delete"><RedX /></button>
        </Strip>
        <ListBox>
          <ReferralTable>
            <colgroup><col width="90" /><col /><col width="170" /><col width="79" /><col width="75" /><col width="74" /></colgroup>
            <thead><tr><th>Refer. Date</th><th>Insurance Policy</th><th>Referral From</th><th>Refer To</th><th>Diagnosis</th><th>Status</th></tr></thead>
            <tbody><tr><td>10/03/2022</td><td>Blue Choice&nbsp; (10)</td><td>Leonard, Dennis</td><td>Plummer</td><td /><td>Active</td></tr></tbody>
          </ReferralTable>
        </ListBox>
      </ListRow>
      <FormRow>
        <Fields>
          <DropField id="policy" label="Policy:" value={"Blue Choice\u00a0 (10)"} />
          <FieldRow>
            <RightLabel htmlFor="from">Referral From:</RightLabel>
            <FieldLine><Field id="from" defaultValue="Leonard MD, Dennis" /><Strip><button type="button" aria-label="Find"><Binoculars /></button></Strip></FieldLine>
          </FieldRow>
          <DateField id="referred" label="Date Referred:" value="10/03/2022" />
          <DropField id="to" label="Referred To:" value="Plummer MD, David H" />
          <FieldRow><RightLabel htmlFor="auth">Authorization#:</RightLabel><Field id="auth" $w="calc(100% - 2px)" defaultValue="7398579843" /></FieldRow>
          <FieldRow><RightLabel htmlFor="cert">Pre-Certification#:</RightLabel><Field id="cert" $w="calc(100% - 2px)" /></FieldRow>
          <CodeField id="dx" label="Diagnoses:" />
          <CodeField id="px" label="Procedures:" />
          <DateField id="expires" label="Expiration Date:" value="10/31/2022" />
          <FieldRow>
            <RightLabel htmlFor="visits">Authorized Visits:</RightLabel>
            <VisitsLine>
              <DateBox><Field id="visits" defaultValue="1" /><SpinButtons w={16} h={25} s={7} /></DateBox>
              <Check><input type="checkbox" />Docum. Required</Check>
            </VisitsLine>
          </FieldRow>
        </Fields>
        <Side>
          <StatHeading><span>Referral Statistics</span></StatHeading>
          <Stats $gap={10} $numeric>
            <dt>Authorized Visits:</dt><dd>1</dd>
            <dt>Charged Visits:</dt><dd>0</dd>
            <dt>Uncharged Visits:</dt><dd>1</dd>
            <dt>Future Visits:</dt><dd>0</dd>
            <dt>Visits Remaining:</dt><dd>0</dd>
          </Stats>
          <Stats $gap={9}>
            <dt>First Appointment:</dt><dd>10/13/2022</dd>
            <dt>Date Last Voucher:</dt><dd />
          </Stats>
          <StatusBox>
            <legend>Status</legend>
            <StatusRow>
              <Radio><input type="radio" name="status" defaultChecked />Active</Radio>
              <Radio><input type="radio" name="status" />Complete</Radio>
              <Radio><input type="radio" name="status" />No Show</Radio>
            </StatusRow>
          </StatusBox>
        </Side>
      </FormRow>
      <Separator $top={11} />
      <NotesRow><TopLabel htmlFor="notes">Notes:</TopLabel><Area id="notes" $h={56} defaultValue="New Patient Consultation" /></NotesRow>
      <Separator $top={12} />
      <Footer>
        <FooterChecks>
          <Check><input type="checkbox" defaultChecked /><span><u>A</u>ttach to Appointment</span></Check>
          <Check><input type="checkbox" /><span><u>L</u>ink (do not count visit)</span></Check>
        </FooterChecks>
        <FooterButtons>
          <Push type="button" disabled><u>S</u>ave</Push>
          <Push type="button" disabled><u>C</u>ancel</Push>
          <Push type="button" $default><u>O</u>K</Push>
        </FooterButtons>
      </Footer>
    </DialogBody>
  </Dialog>
);

export default function App() {
  return (
    <Shell>
      <Global />
      <Frame>
        <Toolbar>
          <IconRun $width={100} $count={3} $start={2}><Tools items={fileIcons} /></IconRun>
          <Divider />
          <IconRun $width={96} $count={3} $start={4}><Tools items={navIcons} /></IconRun>
          <Divider />
          <SelectBox $kind="toolbar"><select aria-label="Database"><option>ADEVDM3</option></select><Chevron /></SelectBox>
          <Divider />
          <IconRun $width={62} $count={2}><Tools items={adminIcons} /></IconRun>
          <Divider />
          <IconRun $width={619} $count={19}><Tools items={moduleIcons} /></IconRun>
        </Toolbar>
        <Workspace>
          <Panel>
            <PanelTitle>Functions<Pin /></PanelTitle>
            <SelectBox $kind="panel"><select aria-label="Module"><option>Practice Management</option></select><Chevron /></SelectBox>
            <Rule />
            <Menu>{menu.map((m) => <MenuItem key={m}>{m}<RoundChevron /></MenuItem>)}</Menu>
          </Panel>
          <Content>
            <DocTabs>
              {docs.map((d) => (
                <DocTab key={d.sub} $active={d.active}>
                  <DocText><strong>{d.title}</strong>{d.sub}</DocText>
                  <button aria-label="Close tab"><TabClose light={d.active} /></button>
                </DocTab>
              ))}
            </DocTabs>
            <PageFrame>
              <SubTabs>
                {subTabs.map((t, i) => <SubTab key={t} $active={i === 0}><span>{t}</span><Slant active={i === 0} /></SubTab>)}
              </SubTabs>
              <PatientHeader>
                <h1>Derrick Davies</h1>
                <Facts><dt>DOB:</dt><dd>12/12/1962</dd><dt>SSN:</dt><dd>*****0681</dd></Facts>
                <Facts><dt>Sex:</dt><dd>M</dd><dt>Age:</dt><dd>59 years</dd></Facts>
              </PatientHeader>
              <Body>
                <PatientColumn>
                  <PatientGrid>
                    <RightLabel htmlFor="patient">Patient:</RightLabel>
                    <PatientField>
                      <Field id="patient" $w="196px" $muted defaultValue="Derrick Davies" />
                      <Strip>
                        <button aria-label="Key"><Key /></button>
                        <button aria-label="Find"><Binoculars gray /></button>
                        <button aria-label="Next"><Arrow /></button>
                        <button aria-label="Print"><Stamp /></button>
                        <button aria-label="Attach"><Stamp /></button>
                      </Strip>
                    </PatientField>
                    <Address>Derrick Davies<br />7380 St. James Place, Tennessee Avenue<br />Omaha, NE 68101</Address>
                    <CommentRow><span>Comment:</span></CommentRow>
                    <Actions>
                      <ActionStack>
                        <Push><u>P</u>atient Info...</Push>
                        <Push $default>Referra<u>l</u>s...</Push>
                        <Push><u>R</u>ecalls...</Push>
                      </ActionStack>
                      <VisitTable>
                        <colgroup><col /><col /></colgroup>
                        <thead><tr><th>Date</th><th>Time</th></tr></thead>
                        <tbody>
                          <tr><td>10/13/22</td><td>10:00</td></tr>
                          <tr><td>10/14/22</td><td>10:00</td></tr>
                          <tr><td>10/14/22</td><td>02:00</td></tr>
                        </tbody>
                      </VisitTable>
                    </Actions>
                  </PatientGrid>
                  <Booking>
                    <BookingGroup>
                      <Labeled id="visit" label="Visit Type:" />
                      <Labeled id="coverage" label="Coverage Type:" value="Medical" />
                      <Labeled id="ailment" label="Ailment:" />
                    </BookingGroup>
                    <BookingGroup>
                      <Labeled id="dept" label="Sched. Dept:" value="Medical Department" />
                      <Labeled id="location" label="Sched. Location:" value="Allscripts Specialty Clinic" />
                      <ResourceLabel><RightLabel htmlFor="resource">Resource:</RightLabel><SpinButtons w={22} h={34} s={7} /></ResourceLabel>
                      <Field id="resource" defaultValue="Plummer MD, David H" />
                      <Labeled id="appt" label="Appt Type:" />
                      <RightLabel htmlFor="duration">Duration:</RightLabel>
                      <InlineSpin $w={76}><Field id="duration" /><SpinButtons w={15} h={25} s={6} /></InlineSpin>
                      <Labeled id="doctor" label="Refer. Doctor:" value="Leonard MD, Dennis" />
                      <TopLabel htmlFor="comments">Comments:</TopLabel>
                      <Area id="comments" $h={40} defaultValue="Elevated PSA" />
                    </BookingGroup>
                  </Booking>
                </PatientColumn>
                <Balances>
                  <dt>Self-Pay Balance:</dt><dd>$0.00</dd>
                  <dt>Medical Co-Pay:</dt><dd>$10.00/$0.00</dd>
                </Balances>
              </Body>
            </PageFrame>
          </Content>
        </Workspace>
      </Frame>
      <ReferralsDialog />
      <Pointer width="10" height="20" viewBox="0 0 10 20" aria-hidden="true"><path d="M1 1h3l1 1 1-1h3M5 2v16M2 19h2l1-1 1 1h2" fill="none" stroke="#555" /></Pointer>
    </Shell>
  );
}
